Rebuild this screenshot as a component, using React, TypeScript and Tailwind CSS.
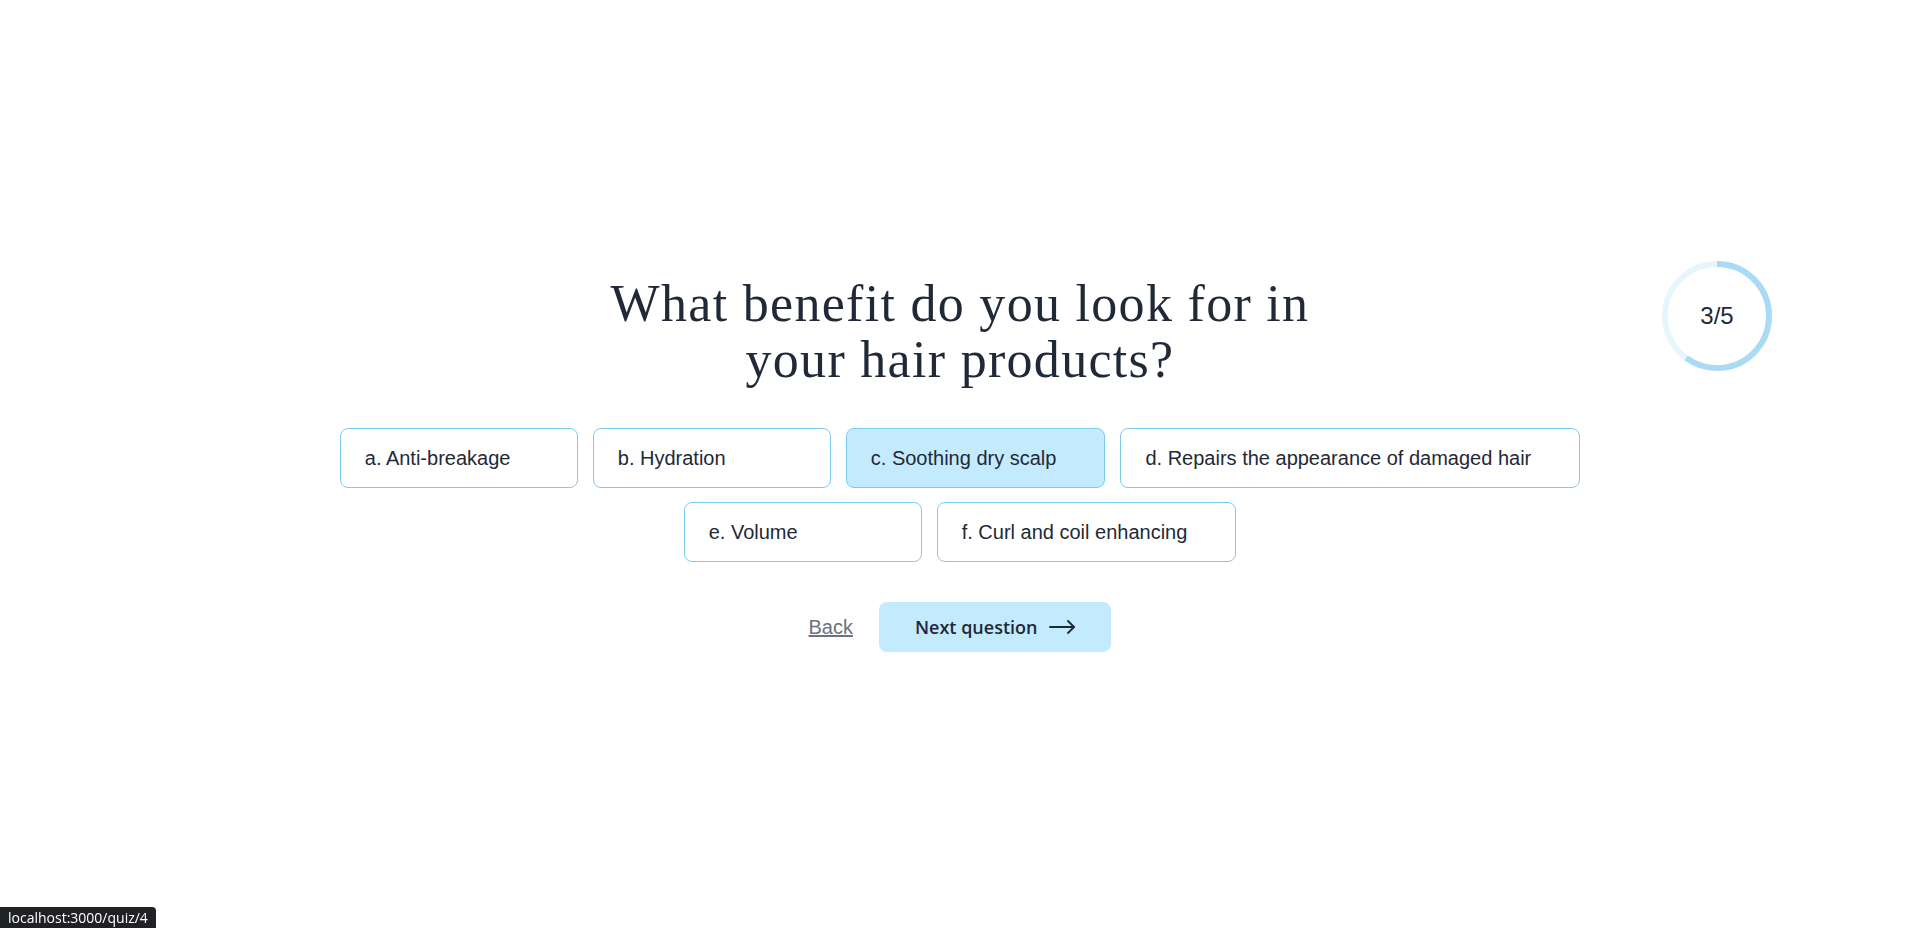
const options = [
  { key: "a", label: "Anti-breakage" },
  { key: "b", label: "Hydration" },
  { key: "c", label: "Soothing dry scalp" },
  { key: "d", label: "Repairs the appearance of damaged hair" },
  { key: "e", label: "Volume" },
  { key: "f", label: "Curl and coil enhancing" },
];

const selected = "c";

function ProgressRing({ step, total }: { step: number; total: number }) {
  const r = 52;
  const c = 2 * Math.PI * r;
  const done = (step / total) * c;

  return (
    <div className="relative h-[110px] w-[110px]">
      <svg width="110" height="110" viewBox="0 0 110 110" className="-rotate-90">
        <circle cx="55" cy="55" r={r} fill="none" stroke="#e7f5fc" strokeWidth="6" />
        <circle
          cx="55"
          cy="55"
          r={r}
          fill="none"
          stroke="#a9dcf4"
          strokeWidth="6"
          strokeDasharray={`${done} ${c}`}
        />
      </svg>
      <span className="absolute inset-0 flex items-center justify-center font-['Liberation_Sans',Arial,sans-serif] text-2xl text-[#1f2937]">
        {step}/{total}
      </span>
    </div>
  );
}

export default function App() {
  return (
    <main className="relative flex min-h-screen items-center justify-center bg-white">
      <div className="absolute right-[148px] top-[261px]">
        <ProgressRing step={3} total={5} />
      </div>

      <div className="flex flex-col items-center">
        <h1 className="text-center font-['Liberation_Serif','Times_New_Roman',serif] text-[52px] leading-[56px] tracking-[0.025em] text-[#1f2937]">
          What benefit do you look for in
          <br />
          your hair products?
        </h1>

        <div className="mt-10 flex max-w-[1260px] flex-wrap justify-center gap-x-[15px] gap-y-[14px]">
          {options.map((o) => (
            <button
              key={o.key}
              className={`flex h-[60px] min-w-[238px] items-center rounded-lg border border-[#7ccaf0] pl-6 pr-12 text-left font-['Liberation_Sans',Arial,sans-serif] text-xl text-[#1f2937] ${
                o.key === selected ? "bg-[#c4ebfd]" : "bg-white"
              }`}
            >
              {o.key}. {o.label}
            </button>
          ))}
        </div>

        <div className="mt-10 flex items-center gap-[26px]">
          <a
            href="#"
            className="font-['Liberation_Sans',Arial,sans-serif] text-xl text-[#6b7280] underline"
          >
            Back
          </a>
          <button className="flex h-[50px] items-center gap-3 rounded-lg bg-[#c4ebfd] px-9 font-['Open_Sans','Noto_Sans',sans-serif] text-lg font-semibold text-[#1f2937]">
            Next question
            <svg width="26" height="14" viewBox="0 0 26 14" fill="none" stroke="#1f2937" strokeWidth="1.8" strokeLinecap="round" strokeLinejoin="round">
              <path d="M1 7h24" />
              <path d="M19 1l6 6-6 6" />
            </svg>
          </button>
        </div>
      </div>

      <div className="fixed bottom-0 left-0 rounded-tr-[4px] bg-[#202124] px-[8px] py-[2px] font-['Open_Sans','Noto_Sans',sans-serif] text-[14px] leading-[17px] text-white">
        localhost:3000/quiz/4
      </div>
    </main>
  );
}
